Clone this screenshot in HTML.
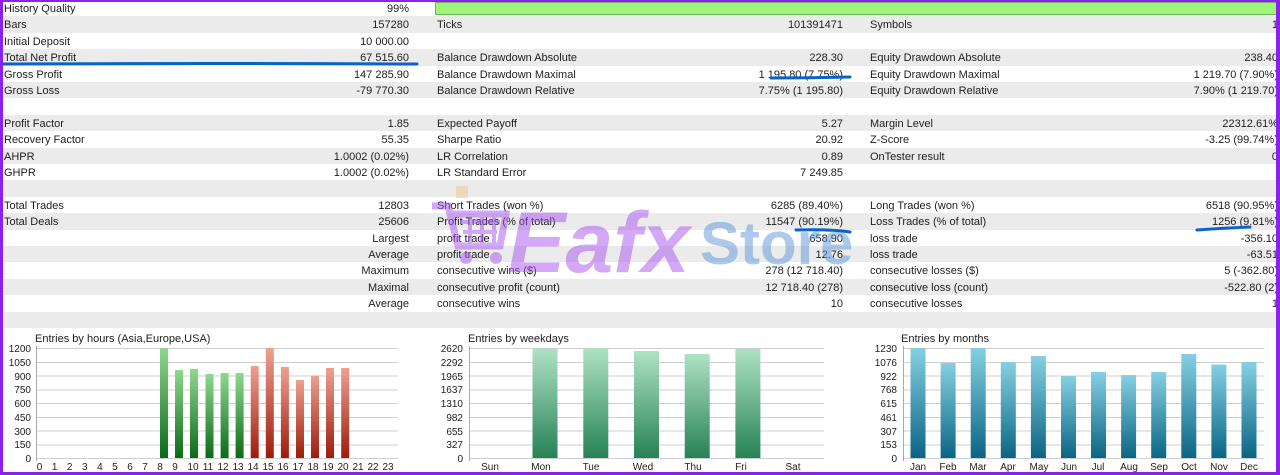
<!DOCTYPE html>
<html><head><meta charset="utf-8"><style>
*{margin:0;padding:0;box-sizing:border-box}
body{width:1280px;height:475px;overflow:hidden;background:#fff;font-family:"Liberation Sans",Arial,sans-serif;font-size:11px;color:#1e1e1e;position:relative}
.r{position:absolute;left:0;width:1280px;height:16.4px}
.g{background:#ebebeb}
.t{position:absolute;top:3px;white-space:nowrap;line-height:13px}
.v{position:absolute;top:3px;white-space:nowrap;line-height:13px;text-align:right}
.bd{position:absolute;background:#8a22ee}
</style></head><body>
<div class="r" style="top:0"><span class="t" style="left:4px">History Quality</span><span class="v" style="right:871px">99%</span>
<div style="position:absolute;left:435px;top:2px;width:842px;height:13px;background:#9cf57a;border:1px solid #6fb85a"></div></div>
<div class="r g" style="top:16.4px"><span class="t" style="left:4px">Bars</span><span class="v" style="right:871px">157280</span><span class="t" style="left:437px">Ticks</span><span class="v" style="right:437px">101391471</span><span class="t" style="left:870px">Symbols</span><span class="v" style="right:2px">1</span></div>
<div class="r" style="top:32.8px"><span class="t" style="left:4px">Initial Deposit</span><span class="v" style="right:871px">10 000.00</span></div>
<div class="r g" style="top:49.2px"><span class="t" style="left:4px">Total Net Profit</span><span class="v" style="right:871px">67 515.60</span><span class="t" style="left:437px">Balance Drawdown Absolute</span><span class="v" style="right:437px">228.30</span><span class="t" style="left:870px">Equity Drawdown Absolute</span><span class="v" style="right:2px">238.40</span></div>
<div class="r" style="top:65.6px"><span class="t" style="left:4px">Gross Profit</span><span class="v" style="right:871px">147 285.90</span><span class="t" style="left:437px">Balance Drawdown Maximal</span><span class="v" style="right:437px">1 195.80 (7.75%)</span><span class="t" style="left:870px">Equity Drawdown Maximal</span><span class="v" style="right:2px">1 219.70 (7.90%)</span></div>
<div class="r g" style="top:82px"><span class="t" style="left:4px">Gross Loss</span><span class="v" style="right:871px">-79 770.30</span><span class="t" style="left:437px">Balance Drawdown Relative</span><span class="v" style="right:437px">7.75% (1 195.80)</span><span class="t" style="left:870px">Equity Drawdown Relative</span><span class="v" style="right:2px">7.90% (1 219.70)</span></div>
<div class="r" style="top:98.4px"></div>
<div class="r g" style="top:114.8px"><span class="t" style="left:4px">Profit Factor</span><span class="v" style="right:871px">1.85</span><span class="t" style="left:437px">Expected Payoff</span><span class="v" style="right:437px">5.27</span><span class="t" style="left:870px">Margin Level</span><span class="v" style="right:2px">22312.61%</span></div>
<div class="r" style="top:131.2px"><span class="t" style="left:4px">Recovery Factor</span><span class="v" style="right:871px">55.35</span><span class="t" style="left:437px">Sharpe Ratio</span><span class="v" style="right:437px">20.92</span><span class="t" style="left:870px">Z-Score</span><span class="v" style="right:2px">-3.25 (99.74%)</span></div>
<div class="r g" style="top:147.6px"><span class="t" style="left:4px">AHPR</span><span class="v" style="right:871px">1.0002 (0.02%)</span><span class="t" style="left:437px">LR Correlation</span><span class="v" style="right:437px">0.89</span><span class="t" style="left:870px">OnTester result</span><span class="v" style="right:2px">0</span></div>
<div class="r" style="top:164px"><span class="t" style="left:4px">GHPR</span><span class="v" style="right:871px">1.0002 (0.02%)</span><span class="t" style="left:437px">LR Standard Error</span><span class="v" style="right:437px">7 249.85</span></div>
<div class="r g" style="top:180.4px"></div>
<div class="r" style="top:196.8px"><span class="t" style="left:4px">Total Trades</span><span class="v" style="right:871px">12803</span><span class="t" style="left:437px">Short Trades (won %)</span><span class="v" style="right:437px">6285 (89.40%)</span><span class="t" style="left:870px">Long Trades (won %)</span><span class="v" style="right:2px">6518 (90.95%)</span></div>
<div class="r g" style="top:213.2px"><span class="t" style="left:4px">Total Deals</span><span class="v" style="right:871px">25606</span><span class="t" style="left:437px">Profit Trades (% of total)</span><span class="v" style="right:437px">11547 (90.19%)</span><span class="t" style="left:870px">Loss Trades (% of total)</span><span class="v" style="right:2px">1256 (9.81%)</span></div>
<div class="r" style="top:229.6px"><span class="v" style="right:871px">Largest</span><span class="t" style="left:437px">profit trade</span><span class="v" style="right:437px">658.90</span><span class="t" style="left:870px">loss trade</span><span class="v" style="right:2px">-356.10</span></div>
<div class="r g" style="top:246px"><span class="v" style="right:871px">Average</span><span class="t" style="left:437px">profit trade</span><span class="v" style="right:437px">12.76</span><span class="t" style="left:870px">loss trade</span><span class="v" style="right:2px">-63.51</span></div>
<div class="r" style="top:262.4px"><span class="v" style="right:871px">Maximum</span><span class="t" style="left:437px">consecutive wins ($)</span><span class="v" style="right:437px">278 (12 718.40)</span><span class="t" style="left:870px">consecutive losses ($)</span><span class="v" style="right:2px">5 (-362.80)</span></div>
<div class="r g" style="top:278.8px"><span class="v" style="right:871px">Maximal</span><span class="t" style="left:437px">consecutive profit (count)</span><span class="v" style="right:437px">12 718.40 (278)</span><span class="t" style="left:870px">consecutive loss (count)</span><span class="v" style="right:2px">-522.80 (2)</span></div>
<div class="r" style="top:295.2px"><span class="v" style="right:871px">Average</span><span class="t" style="left:437px">consecutive wins</span><span class="v" style="right:437px">10</span><span class="t" style="left:870px">consecutive losses</span><span class="v" style="right:2px">1</span></div>
<div class="r g" style="top:311.6px;height:16px"></div>

<svg style="position:absolute;left:0;top:0" width="1280" height="475" font-family="Liberation Sans,Arial,sans-serif" font-size="10" fill="#222">
<defs>
<linearGradient id="gg" x1="0" y1="0" x2="0" y2="1"><stop offset="0" stop-color="#8fd88f"/><stop offset="1" stop-color="#0b6a18"/></linearGradient>
<linearGradient id="rg" x1="0" y1="0" x2="0" y2="1"><stop offset="0" stop-color="#eea090"/><stop offset="1" stop-color="#9c1c0c"/></linearGradient>
<linearGradient id="wg" x1="0" y1="0" x2="0" y2="1"><stop offset="0" stop-color="#aee2c4"/><stop offset="1" stop-color="#278255"/></linearGradient>
<linearGradient id="mg" x1="0" y1="0" x2="0" y2="1"><stop offset="0" stop-color="#86d0e2"/><stop offset="1" stop-color="#0a6584"/></linearGradient>
</defs>
<g stroke="#cfcfcf" stroke-width="1">
<path d="M36 348.5H398M36 362.5H398M36 376H398M36 390H398M36 403.5H398M36 417.5H398M36 431H398M36 445H398M36 458.5H398"/>
<path d="M469 348.5H824M469 362.5H824M469 376H824M469 390H824M469 403.5H824M469 417.5H824M469 431H824M469 445H824M469 458.5H824"/>
<path d="M903 348.5H1264M903 362.5H1264M903 376H1264M903 390H1264M903 403.5H1264M903 417.5H1264M903 431H1264M903 445H1264M903 458.5H1264"/>
<path d="M36.5 346V461M469.5 346V461M903.5 346V461" stroke="#aaa"/>
</g>
<text x="35" y="342" font-size="11">Entries by hours (Asia,Europe,USA)</text>
<text x="468" y="342" font-size="11">Entries by weekdays</text>
<text x="901" y="342" font-size="11">Entries by months</text>
<g text-anchor="end">
<text x="31" y="352">1200</text><text x="31" y="366">1050</text><text x="31" y="380">900</text><text x="31" y="393">750</text><text x="31" y="407">600</text><text x="31" y="421">450</text><text x="31" y="435">300</text><text x="31" y="448">150</text><text x="31" y="462">0</text>
<text x="463" y="352">2620</text><text x="463" y="366">2292</text><text x="463" y="380">1965</text><text x="463" y="393">1637</text><text x="463" y="407">1310</text><text x="463" y="421">982</text><text x="463" y="435">655</text><text x="463" y="448">327</text><text x="463" y="462">0</text>
<text x="897" y="352">1230</text><text x="897" y="366">1076</text><text x="897" y="380">922</text><text x="897" y="393">768</text><text x="897" y="407">615</text><text x="897" y="421">461</text><text x="897" y="435">307</text><text x="897" y="448">153</text><text x="897" y="462">0</text>
</g>
<g fill="url(#gg)">
<rect x="160" y="348" width="8" height="110"/><rect x="175" y="370" width="8" height="88"/><rect x="190" y="369" width="8" height="89"/><rect x="205.5" y="374" width="8" height="84"/><rect x="220.6" y="373" width="8" height="85"/><rect x="235.6" y="373" width="8" height="85"/>
</g>
<g fill="url(#rg)">
<rect x="250.7" y="366" width="8" height="92"/><rect x="265.8" y="348" width="8" height="110"/><rect x="280.9" y="367" width="8" height="91"/><rect x="296" y="380" width="8" height="78"/><rect x="311" y="375.5" width="8" height="82.5"/><rect x="326" y="368" width="8" height="90"/><rect x="341.2" y="368" width="8" height="90"/>
</g>
<g text-anchor="middle">
<text x="39.5" y="470">0</text><text x="54.6" y="470">1</text><text x="69.7" y="470">2</text><text x="84.8" y="470">3</text><text x="99.9" y="470">4</text><text x="114.9" y="470">5</text><text x="130" y="470">6</text><text x="145" y="470">7</text><text x="160" y="470">8</text><text x="175" y="470">9</text><text x="193" y="470">10</text><text x="208" y="470">11</text><text x="223" y="470">12</text><text x="238" y="470">13</text><text x="253" y="470">14</text><text x="268" y="470">15</text><text x="283" y="470">16</text><text x="298" y="470">17</text><text x="313" y="470">18</text><text x="328" y="470">19</text><text x="343" y="470">20</text><text x="358" y="470">21</text><text x="373" y="470">22</text><text x="388" y="470">23</text>
<text x="490" y="470">Sun</text><text x="541" y="470">Mon</text><text x="591" y="470">Tue</text><text x="643" y="470">Wed</text><text x="693" y="470">Thu</text><text x="741" y="470">Fri</text><text x="793" y="470">Sat</text>
<text x="918" y="470">Jan</text><text x="948" y="470">Feb</text><text x="978" y="470">Mar</text><text x="1008" y="470">Apr</text><text x="1039" y="470">May</text><text x="1069" y="470">Jun</text><text x="1098" y="470">Jul</text><text x="1129" y="470">Aug</text><text x="1159" y="470">Sep</text><text x="1189" y="470">Oct</text><text x="1219" y="470">Nov</text><text x="1249" y="470">Dec</text>
</g>
<g fill="url(#wg)">
<rect x="532.5" y="349" width="25" height="109"/><rect x="583.3" y="348" width="25" height="110"/><rect x="634" y="351" width="25" height="107"/><rect x="684.7" y="354" width="25" height="104"/><rect x="735.4" y="349" width="25" height="109"/>
</g>
<g fill="url(#mg)">
<rect x="910.5" y="348" width="15" height="110"/><rect x="940.6" y="363" width="15" height="95"/><rect x="970.7" y="348" width="15" height="110"/><rect x="1000.8" y="362" width="15" height="96"/><rect x="1030.9" y="356" width="15" height="102"/><rect x="1061" y="376" width="15" height="82"/><rect x="1091" y="372" width="15" height="86"/><rect x="1121.1" y="375" width="15" height="83"/><rect x="1151.2" y="372" width="15" height="86"/><rect x="1181.3" y="354" width="15" height="104"/><rect x="1211.4" y="364.5" width="15" height="93.5"/><rect x="1241.5" y="362" width="15" height="96"/>
</g>
<g opacity="0.5">
<rect x="456" y="186" width="12" height="12" fill="#e8c890"/>
<path d="M432 206L448 206L458 246L500 246L506 214L452 214" fill="none" stroke="#a855f0" stroke-width="7"/>
<path d="M460 222H500M463 232H497M470 214V246M482 214V246M494 214V246" stroke="#a855f0" stroke-width="4"/>
<circle cx="466" cy="258" r="6" fill="#a855f0"/><circle cx="496" cy="258" r="6" fill="#a855f0"/>
<text x="508" y="272" font-size="86" font-weight="bold" font-style="italic" fill="#a855f0">Eafx</text>
<text x="700" y="264" font-size="60" font-weight="bold" fill="#5d95d8">Store</text>
</g>
<g stroke="#0a63c9" stroke-width="3" stroke-linecap="round" fill="none">
<path d="M2 64Q200 63 417 64"/><path d="M771 78Q810 78 850 77"/><path d="M796 230Q830 229 850 232"/><path d="M1197 230Q1225 228 1250 227"/>
</g>
</svg>
<div class="bd" style="left:0;top:0;width:3px;height:475px"></div>
<div class="bd" style="right:0;top:0;width:4px;height:475px"></div>
<div class="bd" style="left:0;top:0;width:1280px;height:2px"></div>
<div class="bd" style="left:0;bottom:0;width:1280px;height:3px"></div>
</body></html>
